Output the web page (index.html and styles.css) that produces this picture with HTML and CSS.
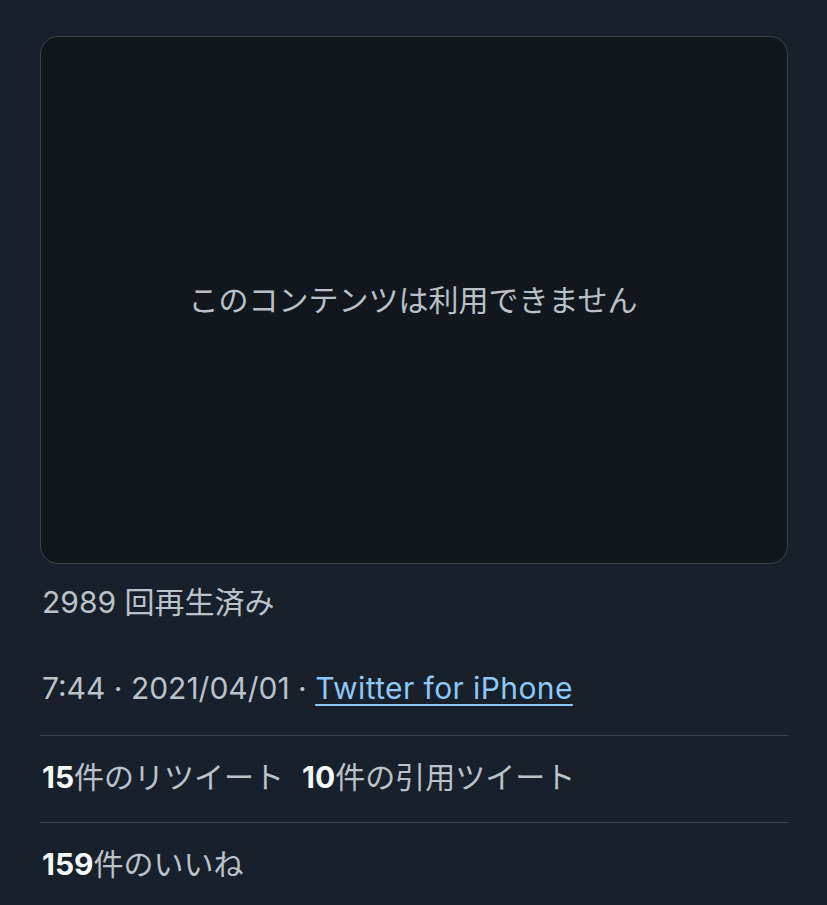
FILE: index.html
```html
<!DOCTYPE html>
<html lang="ja">
<head>
<meta charset="utf-8">
<link rel="stylesheet" href="styles.css">
</head>
<body>
<main class="tweet">
  <div class="media">
    <span class="media-msg">このコンテンツは利用できません</span>
  </div>
  <div class="views">2989 回再生済み</div>
  <div class="meta">7:44 · 2021/04/01 · <a class="source" href="#">Twitter for iPhone</a></div>
  <div class="stats">
    <span class="stat"><b>15</b>件のリツイート</span>
    <span class="stat"><b>10</b>件の引用ツイート</span>
  </div>
  <div class="stats">
    <span class="stat"><b>159</b>件のいいね</span>
  </div>
</main>
</body>
</html>
```

FILE: styles.css
```css
html, body {
  margin: 0;
  padding: 0;
  background: #18202b;
}
body {
  font-family: Inter, "Noto Sans CJK JP", sans-serif;
  color: #bcc2c9;
  font-size: 30px;
}
.tweet {
  margin: 0 39px 0 40px;
  padding-top: 36px;
}
.media {
  height: 526px;
  background: #12171e;
  border: 1px solid #3a434d;
  border-radius: 18px;
  display: flex;
  align-items: center;
  justify-content: center;
}
.media-msg {
  color: #b9c0c7;
  font-size: 30px;
  line-height: 40px;
  padding-right: 2px;
}
.views {
  margin-top: 18px;
  line-height: 40px;
  padding-left: 2px;
}
.meta {
  margin-top: 46px;
  line-height: 40px;
  padding-left: 2px;
  padding-bottom: 27px;
}
.source {
  color: #8ec8f6;
  letter-spacing: 0.4px;
  text-decoration: underline;
  text-underline-offset: 5px;
  text-decoration-thickness: 2px;
}
.stats {
  border-top: 1px solid #38424c;
  padding: 21px 0 25px 2px;
  line-height: 40px;
  display: flex;
  gap: 18px;
}
.stat b {
  color: #f5f8fa;
  font-weight: 700;
}
```
